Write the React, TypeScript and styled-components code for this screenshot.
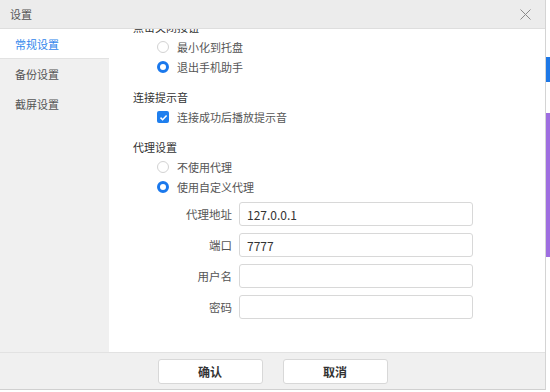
import React from 'react';
import styled, { createGlobalStyle } from 'styled-components';

const GlobalStyle = createGlobalStyle`
  html, body {
    margin: 0;
    padding: 0;
    background: #ffffff;
  }
  body {
    font-family: "Noto Sans CJK SC", "Noto Sans", "Liberation Sans", sans-serif;
    font-size: 11px;
    color: #444;
  }
`;

const Page = styled.div`
  display: flex;
  width: 550px;
  height: 392px;
  overflow: hidden;
  background: #ffffff;
`;

const Dialog = styled.div`
  display: flex;
  flex-direction: column;
  width: 545px;
  height: 389px;
  border-right: 1px solid #d4d4d4;
  border-bottom: 1px solid #d0d0d0;
  flex-shrink: 0;
`;

const TitleBar = styled.div`
  display: flex;
  align-items: center;
  justify-content: space-between;
  height: 28px;
  padding: 0 10px 0 10px;
  background: #ececec;
  border-bottom: 1px solid #dedede;
  flex-shrink: 0;
`;

const Title = styled.span`
  font-size: 11px;
  color: #555;
`;

const CloseButton = styled.button`
  display: flex;
  align-items: center;
  justify-content: center;
  width: 18px;
  height: 18px;
  padding: 0;
  margin-right: 1px;
  border: none;
  background: transparent;
  color: #8a8a8a;
`;

const Body = styled.div`
  display: flex;
  flex: 1;
  min-height: 0;
`;

const Sidebar = styled.div`
  display: flex;
  flex-direction: column;
  width: 109px;
  background: #f0f0f0;
  flex-shrink: 0;
`;

const NavItem = styled.div<{ $active?: boolean }>`
  display: flex;
  align-items: center;
  height: 29px;
  padding-left: 15px;
  font-size: 11px;
  color: ${p => (p.$active ? '#2f86ec' : '#555')};
  background: ${p => (p.$active ? '#ffffff' : 'transparent')};
  border-bottom: 1px solid ${p => (p.$active ? '#e2e2e2' : 'transparent')};
`;

const Content = styled.div`
  flex: 1;
  background: #ffffff;
  overflow: hidden;
  padding-left: 24px;
`;

/* content is scrolled down a little, so the first heading sits under the title bar */
const Scroller = styled.div`
  margin-top: -12px;
`;

const Section = styled.div`
  display: flex;
  flex-direction: column;
  margin-bottom: 10px;
`;

const SectionTitle = styled.div`
  height: 20px;
  line-height: 20px;
  color: #333;
  font-size: 11px;
`;

const OptionRow = styled.label`
  display: flex;
  align-items: center;
  gap: 8px;
  height: 20px;
  padding-left: 24px;
  color: #555;
  font-size: 11px;
`;

const Radio = styled.span<{ $checked?: boolean }>`
  box-sizing: border-box;
  width: 12px;
  height: 12px;
  border-radius: 50%;
  background: #fff;
  border: ${p => (p.$checked ? '3.5px solid #1a78ec' : '1px solid #d2d2d2')};
  flex-shrink: 0;
`;

const Checkbox = styled.span`
  display: flex;
  align-items: center;
  justify-content: center;
  width: 12px;
  height: 12px;
  border-radius: 2px;
  background: #1f7fee;
  flex-shrink: 0;
`;

const Form = styled.div`
  display: flex;
  flex-direction: column;
  gap: 7px;
  margin-top: -5px;
`;

const FormRow = styled.div`
  display: flex;
  align-items: center;
  gap: 7px;
`;

const FieldLabel = styled.span`
  width: 99px;
  text-align: right;
  color: #555;
  font-size: 11.5px;
`;

const Input = styled.input`
  box-sizing: border-box;
  width: 234px;
  height: 24px;
  padding: 0 7px;
  border: 1px solid #d8d8d8;
  border-radius: 3px;
  font-family: "Noto Sans CJK SC", "Noto Sans", sans-serif;
  font-size: 12px;
  color: #333;
  outline: none;
`;

const Footer = styled.div`
  display: flex;
  align-items: center;
  justify-content: center;
  gap: 20px;
  height: 36px;
  background: #f0f0f0;
  border-top: 1px solid #e2e2e2;
  flex-shrink: 0;
`;

const Button = styled.button`
  width: 105px;
  height: 25px;
  background: #ffffff;
  border: 1px solid #d8d8d8;
  border-radius: 3px;
  font-family: "Noto Sans CJK SC", sans-serif;
  font-size: 12px;
  font-weight: bold;
  color: #333;
`;

const BackStrip = styled.div`
  display: flex;
  flex-direction: column;
  flex: 1;
  padding-top: 57px;
`;

const StripBlock = styled.div<{ $h: number; $color: string; $mt?: number }>`
  height: ${p => p.$h}px;
  margin-top: ${p => p.$mt ?? 0}px;
  background: ${p => p.$color};
`;

const CloseIcon = () => (
  <svg width="11" height="11" viewBox="0 0 11 11">
    <path d="M0.5 0.5 L10.5 10.5 M10.5 0.5 L0.5 10.5" stroke="currentColor" strokeWidth="1" />
  </svg>
);

const CheckIcon = () => (
  <svg width="9" height="9" viewBox="0 0 9 9">
    <path d="M1.5 4.6 L3.6 6.7 L7.6 2.4" stroke="#fff" strokeWidth="1.5" fill="none" />
  </svg>
);

const App = () => {
  const nav = ['常规设置', '备份设置', '截屏设置'];
  const fields = [
    { label: '代理地址', value: '127.0.0.1' },
    { label: '端口', value: '7777' },
    { label: '用户名', value: '' },
    { label: '密码', value: '' },
  ];

  return (
    <Page>
      <GlobalStyle />
      <Dialog>
        <TitleBar>
          <Title>设置</Title>
          <CloseButton>
            <CloseIcon />
          </CloseButton>
        </TitleBar>
        <Body>
          <Sidebar>
            {nav.map((n, i) => (
              <NavItem key={n} $active={i === 0}>
                {n}
              </NavItem>
            ))}
          </Sidebar>
          <Content>
            <Scroller>
              <Section>
                <SectionTitle>点击关闭按钮</SectionTitle>
                <OptionRow>
                  <Radio />
                  最小化到托盘
                </OptionRow>
                <OptionRow>
                  <Radio $checked />
                  退出手机助手
                </OptionRow>
              </Section>
              <Section>
                <SectionTitle>连接提示音</SectionTitle>
                <OptionRow>
                  <Checkbox>
                    <CheckIcon />
                  </Checkbox>
                  连接成功后播放提示音
                </OptionRow>
              </Section>
              <Section>
                <SectionTitle>代理设置</SectionTitle>
                <OptionRow>
                  <Radio />
                  不使用代理
                </OptionRow>
                <OptionRow>
                  <Radio $checked />
                  使用自定义代理
                </OptionRow>
              </Section>
              <Form>
                {fields.map(f => (
                  <FormRow key={f.label}>
                    <FieldLabel>{f.label}</FieldLabel>
                    <Input defaultValue={f.value} />
                  </FormRow>
                ))}
              </Form>
            </Scroller>
          </Content>
        </Body>
        <Footer>
          <Button>确认</Button>
          <Button>取消</Button>
        </Footer>
      </Dialog>
      <BackStrip>
        <StripBlock $h={25} $color="#1e78e6" />
        <StripBlock $h={144} $color="#9e6ee0" $mt={31} />
      </BackStrip>
    </Page>
  );
};

export default App;
